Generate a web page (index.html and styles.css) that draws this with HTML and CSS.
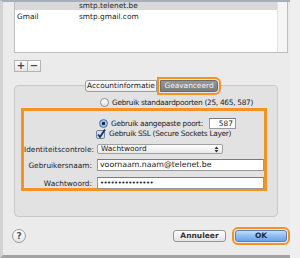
FILE: index.html
```html
<!DOCTYPE html>
<html lang="nl">
<head>
    <meta charset="UTF-8">
    <title>SMTP-server</title>
    <link rel="stylesheet" href="styles.css">
</head>
<body>

<div class="window">
    <div class="list">
        <div class="rows">
            <div class="row row-head">
                <span class="col-name"></span>
                <span class="col-server">smtp.telenet.be</span>
            </div>
            <div class="row">
                <span class="col-name">Gmail</span>
                <span class="col-server">smtp.gmail.com</span>
            </div>
        </div>
        <div class="scroll"></div>
    </div>

    <div class="pm">
        <span class="pm-btn">+</span>
        <span class="pm-btn">&minus;</span>
    </div>

    <div class="tabs">
        <span class="tab">Accountinformatie</span>
        <span class="tab tab-on">Geavanceerd</span>
    </div>

    <div class="panel">
        <div class="opt opt-top">
            <span class="radio"></span>
            Gebruik standaardpoorten (25, 465, 587)
        </div>

        <div class="mark">
            <div class="opt">
                <span class="radio radio-on"></span>
                Gebruik aangepaste poort:
                <span class="field port">587</span>
            </div>
            <div class="opt opt-ssl">
                <svg class="check" width="10" height="10" viewBox="0 0 10 10">
                    <rect x="0.5" y="1.5" width="8" height="8" rx="1.5" fill="#cfe0f4" stroke="#6f86a6"/>
                    <path d="M2 5.5 L4 8 L9 0.5" fill="none" stroke="#1d3457" stroke-width="1.8"/>
                </svg>
                Gebruik SSL (Secure Sockets Layer)
            </div>
            <div class="form-row form-select">
                <span class="label">Identiteitscontrole:</span>
                <span class="select">
                    Wachtwoord
                    <svg class="arrows" width="5" height="7" viewBox="0 0 5 7">
                        <path d="M0.5 3 L2.5 0.5 L4.5 3 Z M0.5 4 L2.5 6.5 L4.5 4 Z" fill="#333"/>
                    </svg>
                </span>
            </div>
            <div class="form-row form-user">
                <span class="label">Gebruikersnaam:</span>
                <span class="field wide">voornaam.naam@telenet.be</span>
            </div>
            <div class="form-row form-pass">
                <span class="label">Wachtwoord:</span>
                <span class="field wide dots">&bull;&bull;&bull;&bull;&bull;&bull;&bull;&bull;&bull;&bull;&bull;&bull;&bull;&bull;&bull;</span>
            </div>
        </div>
    </div>

    <div class="footer">
        <span class="help">?</span>
        <span class="btn">Annuleer</span>
        <span class="btn btn-ok">OK</span>
    </div>
</div>

</body>
</html>
```

FILE: styles.css
```css
body {
    margin: 0;
    width: 300px;
    height: 258px;
    overflow: hidden;
    background-color: #efefef;
    font-family: "DejaVu Sans", Verdana, sans-serif;
    font-size: 7.4px;
    color: #222;
}

.window {
    width: 274px;
    height: 253px;
    padding: 0 2px 0 11px;
    background-color: #ebebeb;
    border-top: 2px solid #a7afbd;
    border-left: 3px solid #d3d3d3;
    border-bottom: 3px solid #a2a2a2;
    display: flex;
    flex-direction: column;
}

/* server list */

.list {
    height: 50px;
    flex-shrink: 0;
    display: flex;
    background-color: #fff;
    border: 1px solid #bdbdbd;
    border-top: none;
}

.rows {
    flex: 1;
}

.row {
    display: flex;
    height: 14px;
    line-height: 14px;
}

.row-head {
    height: 8px;
    line-height: 7px;
    background-color: #d9d9d9;
}

.col-name {
    width: 62px;
    padding-left: 2px;
}

.scroll {
    width: 9px;
    background-color: #f5f5f5;
    border-left: 1px solid #e2e2e2;
}

.pm {
    display: flex;
    margin-top: 7px;
}

.pm-btn {
    width: 12px;
    height: 10px;
    line-height: 10px;
    text-align: center;
    font-size: 10px;
    font-weight: bold;
    color: #444;
    background: linear-gradient(#fdfdfd, #e6e6e6);
    border: 1px solid #b3b3b3;
}

.pm-btn + .pm-btn {
    border-left: none;
}

/* tabs */

.tabs {
    display: flex;
    margin-top: 8px;
    padding-left: 71px;
    height: 11px;
    position: relative;
    z-index: 1;
}

.tab {
    width: 70px;
    height: 10px;
    line-height: 10px;
    text-align: center;
    background: linear-gradient(#ffffff, #ececec);
    border: 1px solid #9d9d9d;
    border-radius: 3px 0 0 3px;
}

.tab-on {
    margin-left: 3px;
    width: 56px;
    color: #f4f4f4;
    background: linear-gradient(#979797, #7c7c7c);
    border-color: #6c6c6c;
    border-radius: 0 3px 3px 0;
    outline: 2px solid #f39324;
    outline-offset: 1px;
}

.panel {
    margin-top: -6px;
    flex-shrink: 0;
    padding-top: 12px;
    box-sizing: border-box;
    height: 132px;
    width: 264px;
    background-color: #e2e2e2;
    border: 1px solid #c9c9c9;
    border-radius: 4px;
}

/* options */

.opt {
    display: flex;
    align-items: center;
    height: 9px;
    padding-left: 75px;
    white-space: nowrap;
    letter-spacing: -0.3px;
}

.opt-top {
    padding-left: 85px;
}

.radio {
    width: 7px;
    height: 7px;
    margin-right: 3px;
    border: 1px solid #8f8f8f;
    border-radius: 50%;
    background: linear-gradient(#ffffff, #e4e4e4);
}

.radio-on {
    background: radial-gradient(circle, #17294a 0 1.4px, #a7c7ef 1.8px, #6d9bd8 100%);
    border-color: #5673a0;
}

.mark {
    margin: 1px 0 0 6px;
    width: 246px;
    height: 83px;
    box-sizing: border-box;
    padding-top: 8px;
    border: 3px solid #f39324;
}

.port {
    width: 21px;
    height: 9px;
    margin-left: 6px;
    text-align: right;
    letter-spacing: 0;
}

.opt-ssl {
    margin-top: 1px;
    padding-left: 72px;
}

.check {
    margin-right: 3px;
}

.form-row {
    display: flex;
    align-items: center;
    white-space: nowrap;
}

.form-select {
    margin-top: 6px;
}

.form-user {
    margin-top: 5px;
}

.form-pass {
    margin-top: 6px;
}

.label {
    width: 68px;
    margin-right: 5px;
    text-align: right;
}

.select {
    width: 118px;
    height: 8px;
    line-height: 8px;
    padding: 0 3px;
    display: flex;
    justify-content: space-between;
    align-items: center;
    background: linear-gradient(#ffffff, #e8e8e8);
    border: 1px solid #a0a0a0;
    border-radius: 2px;
}

.field {
    height: 9px;
    line-height: 9px;
    padding: 0 2px;
    background-color: #fff;
    border: 1px solid #9a9a9a;
    border-top-color: #7a7a7a;
}

.wide {
    width: 161px;
    height: 10px;
    line-height: 10px;
    padding: 0 2px;
    font-size: 7.8px;
}

.dots {
    font-size: 7px;
    letter-spacing: -0.6px;
}

/* footer */

.footer {
    display: flex;
    align-items: center;
    margin-top: 12px;
}

.help {
    width: 12px;
    height: 12px;
    margin-left: -2px;
    line-height: 12px;
    text-align: center;
    font-size: 9px;
    font-weight: bold;
    color: #555;
    background: linear-gradient(#ffffff, #e6e6e6);
    border: 1px solid #9a9a9a;
    border-radius: 50%;
}

.btn {
    margin-left: auto;
    width: 51px;
    height: 10px;
    line-height: 10px;
    text-align: center;
    font-size: 7.5px;
    font-weight: bold;
    color: #333;
    background: linear-gradient(#ffffff, #e2e2e2);
    border: 1px solid #959595;
    border-radius: 3px;
}

.btn-ok {
    margin-left: 9px;
    margin-right: 1px;
    width: 50px;
    color: #1b2a40;
    background: linear-gradient(#c5defa, #8dbcf0 50%, #6aa4e8);
    border-color: #5b7fb3;
    outline: 2px solid #f39324;
    outline-offset: 1px;
}
```
